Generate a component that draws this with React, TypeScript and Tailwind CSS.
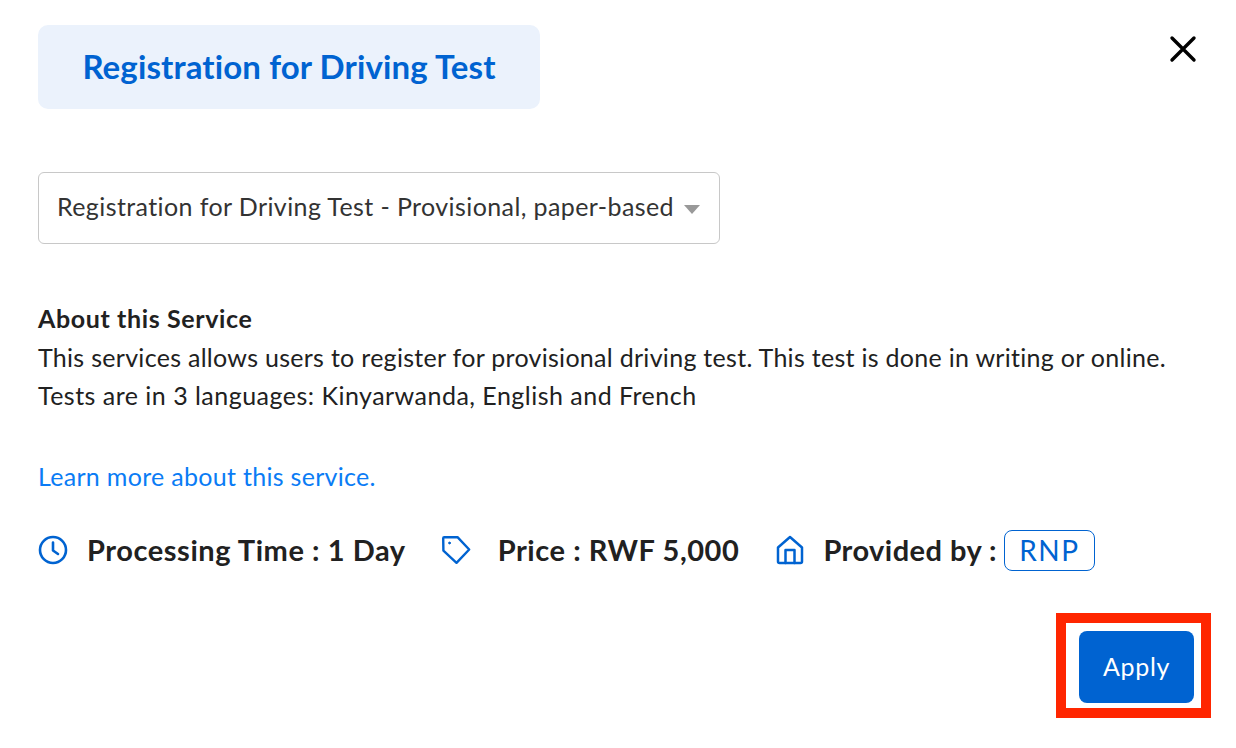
import React from "react";

const font = { fontFamily: '"Lato", "Noto Sans", sans-serif' };

function Clock() {
  return (
    <svg width="30" height="30" viewBox="0 0 30 30" fill="none" stroke="#0063d1" strokeWidth="2.6" strokeLinecap="round" strokeLinejoin="round">
      <circle cx="15" cy="15" r="13" />
      <path d="M15 7.5V15.5L20 19" />
    </svg>
  );
}
function Tag() {
  return (
    <svg width="30" height="30" viewBox="0 0 30 30" fill="none" stroke="#0063d1" strokeWidth="2.4" strokeLinecap="round" strokeLinejoin="round">
      <path d="M2.2 3.2C2.2 2.6 2.6 2.2 3.2 2.2H16.5L28.2 14.5L15.5 27.8L2.4 15.6L2.2 3.2Z" />
      <circle cx="8.5" cy="8" r="0.9" fill="#0063d1" strokeWidth="1" />
    </svg>
  );
}
function Home() {
  return (
    <svg width="30" height="30" viewBox="0 0 30 30" fill="none" stroke="#0063d1" strokeWidth="2.5" strokeLinecap="round" strokeLinejoin="round">
      <path d="M3 12.5L15 2L27 12.5V26.5C27 27.5 26.4 28 25.5 28H4.5C3.6 28 3 27.5 3 26.5V12.5Z" />
      <path d="M10.5 28V15H19.5V28" />
    </svg>
  );
}

export default function App() {
  return (
    <div className="w-[1236px] h-[748px] bg-white overflow-hidden flex flex-col pl-[38px] pt-[25px]" style={font}>
      <div className="flex items-start justify-between">
        <div className="w-[502px] h-[84px] rounded-[10px] bg-[#ebf2fc] flex items-center justify-center text-[#0063d1] text-[33px] font-bold tracking-[0.12px]">
          Registration for Driving Test
        </div>
        <svg className="mr-[39px] mt-[10px]" width="28" height="28" viewBox="0 0 28 28" fill="none" stroke="#000" strokeWidth="3.4" strokeLinecap="round">
          <path d="M3 3L25 25M25 3L3 25" />
        </svg>
      </div>

      <div className="mt-[63px] w-[682px] h-[72px] rounded-[6px] border border-[#c8c8c8] flex items-center justify-between pl-[18px] pr-[19px] text-[#333333] text-[25px] tracking-[0.4px]">
        <span className="-mt-[2px]">Registration for Driving Test - Provisional, paper-based</span>
        <span className="w-0 h-0 border-x-[8px] border-x-transparent border-t-[9px] border-t-[#999999] mt-[3px]" />
      </div>

      <div className="mt-[55px] text-[25px] leading-[38px] text-[#212121]">
        <div className="font-bold tracking-[0.62px]">About this Service</div>
        <div className="tracking-[0.29px] mt-[1px]">This services allows users to register for provisional driving test. This test is done in writing or online.</div>
        <div className="tracking-[0.48px]">Tests are in 3 languages: Kinyarwanda, English and French</div>
      </div>

      <div className="mt-[43px] text-[25px] leading-[38px] text-[#0a7cf5] tracking-[0.3px]">Learn more about this service.</div>

      <div className="mt-[34px] flex items-center h-[42px] text-[#212121] text-[29px] font-bold">
        <Clock />
        <span className="ml-[19px] tracking-[0.56px]">Processing Time : 1 Day</span>
        <span className="ml-[35px]"><Tag /></span>
        <span className="ml-[27px] tracking-[0.56px]">Price : RWF 5,000</span>
        <span className="ml-[36px]"><Home /></span>
        <span className="ml-[18px] tracking-[0.46px]">Provided by :</span>
        <span className="ml-[7px] w-[91px] h-[41px] rounded-[8px] border border-[#0063d1] flex items-center justify-center text-[#0063d1] text-[28px] font-normal tracking-[1.5px]">RNP</span>
      </div>

      <div className="flex justify-end mt-[42px] pr-[25px]">
        <div className="border-[10px] border-[#ff2600] pl-[13px] pr-[7px] pt-[8px] pb-[5px]">
          <button className="w-[115px] h-[72px] rounded-[8px] bg-[#0063d1] text-white text-[25px] tracking-[0.7px] flex items-center justify-center">Apply</button>
        </div>
      </div>
    </div>
  );
}
